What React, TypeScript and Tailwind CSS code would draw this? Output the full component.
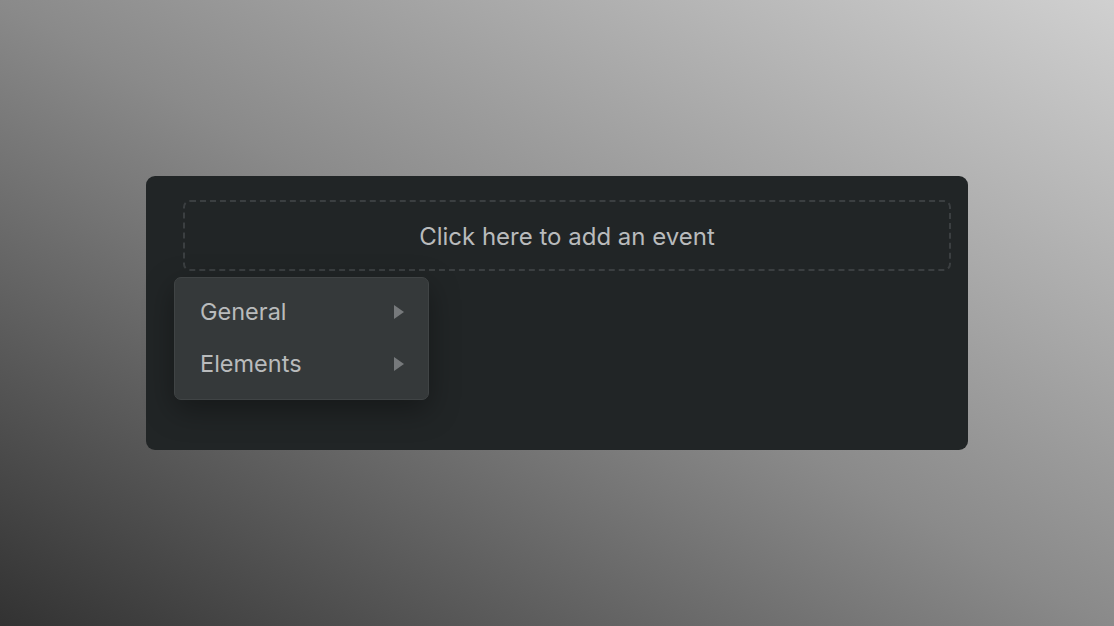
export default function App() {
  return (
    <div
      className="w-[1114px] h-[626px] bg-[linear-gradient(to_top_right,#323232,#8a8a8a_50%,#d0d0d0)] flex items-start justify-start"
      style={{ fontFamily: "Inter, 'Noto Sans', sans-serif" }}
    >
      <div className="relative ml-[146px] mt-[176px] w-[822px] h-[274px] rounded-[9px] bg-[#212526] pl-[37px] pr-[17px] pt-[24px]">
        <div className="h-[71px] rounded-[7px] border-2 border-dashed border-[#3b3f41] flex items-center justify-center pt-[2px] text-[24px] text-[#b9bbbc]">
          Click here to add an event
        </div>
        <div className="absolute left-[28px] top-[101px] w-[255px] h-[123px] rounded-[7px] bg-[#35393a] border border-[#404445] shadow-[0_10px_30px_rgba(0,0,0,0.35)] pt-[8px]">
          {["General", "Elements"].map((t) => (
            <div key={t} className="h-[52px] flex items-center justify-between pl-[25px] pr-[24px] text-[23.5px] text-[#b9bbbc]">
              <span>{t}</span>
              <svg width="10" height="14" viewBox="0 0 10 14">
                <path d="M0 0 L10 7 L0 14 Z" fill="#76797b" />
              </svg>
            </div>
          ))}
        </div>
      </div>
    </div>
  );
}
